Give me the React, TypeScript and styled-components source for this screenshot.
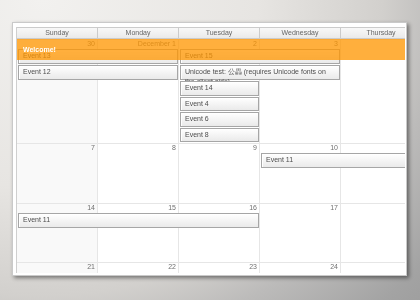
import React from "react";
import styled, { createGlobalStyle } from "styled-components";

const Global = createGlobalStyle`
  html, body { margin: 0; padding: 0; }
  body { font-family: "Liberation Sans", Arial, sans-serif; }
`;

const Stage = styled.div`
  width: 420px;
  height: 300px;
  box-sizing: border-box;
  padding: 22px 0 0 12px;
  overflow: hidden;
  background: radial-gradient(
    ellipse 540px 470px at 10% 0%,
    #f2f1ef 0%,
    #e7e5e2 40%,
    #d2d0cd 63%,
    #bcbbba 74%,
    #a3a3a3 90%,
    #9b9b9b 100%
  );
`;

const Window = styled.div`
  width: 395px;
  height: 254px;
  box-sizing: border-box;
  background: #fff;
  border: 1px solid #c9c9c9;
  padding: 4px 1px 2px 3px;
  box-shadow: 2px 2px 4px rgba(0, 0, 0, 0.45);
`;

const Viewport = styled.div`
  position: relative;
  height: 100%;
  overflow: hidden;
  border-left: 1px solid #cfcfcf;
  font-size: 7px;
  color: #666;
  will-change: transform;
`;

const Calendar = styled.div`
  width: 567px;
`;

const HeaderRow = styled.div`
  display: grid;
  grid-template-columns: repeat(7, 81px);
  height: 12px;
`;

const HeaderCell = styled.div`
  box-sizing: border-box;
  border-top: 1px solid #cbcbcb;
  border-bottom: 1px solid #cbcbcb;
  border-right: 1px solid #cbcbcb;
  background: linear-gradient(#f8f8f8, #eaeaea);
  text-align: center;
  line-height: 10px;
  color: #666;
`;

const Week = styled.div<{ $rows: string }>`
  display: grid;
  grid-template-columns: repeat(7, 81px);
  grid-template-rows: ${(p) => p.$rows};
`;

const Cell = styled.div<{ $col: number; $weekend: boolean }>`
  grid-column: ${(p) => p.$col};
  grid-row: 1 / -1;
  box-sizing: border-box;
  border-right: 1px solid #e6e6e6;
  border-top: 1px solid #e6e6e6;
  background: ${(p) => (p.$weekend ? "#f9f9f9" : "#ffffff")};
`;

const DayNumber = styled.div<{ $col: number }>`
  grid-column: ${(p) => p.$col};
  grid-row: 1;
  text-align: right;
  padding-right: 3px;
  line-height: 10px;
  color: #707070;
`;

const Event = styled.div<{ $col: number; $span: number; $row: number }>`
  grid-column: ${(p) => p.$col} / span ${(p) => p.$span};
  grid-row: ${(p) => p.$row + 1};
  margin: 0 1px 1px 1px;
  box-sizing: border-box;
  border: 1px solid #a6a6a6;
  background: linear-gradient(#ffffff, #eaeaea);
  box-shadow: inset 1px 1px 0 #fff;
  padding: 1px 4px 0 4px;
  line-height: 10px;
  color: #4d4d4d;
  overflow: visible;
  min-width: 0;
`;

const Banner = styled.div`
  position: absolute;
  left: 0;
  right: 0;
  top: 12px;
  height: 21px;
  background: rgba(255, 150, 0, 0.76);
  display: flex;
  align-items: center;
  padding-left: 6px;
  color: #fff;
  font-weight: bold;
  font-size: 7px;
`;

const days = ["Sunday", "Monday", "Tuesday", "Wednesday", "Thursday", "Friday", "Saturday"];

type Ev = { text: string; col: number; span: number; row: number };
type WeekData = { rows: string; labels: string[]; events: Ev[] };

const weeks: WeekData[] = [
  {
    rows: "10px 16px 16px 16px 15px 16px 15px",
    labels: ["30", "December 1", "2", "3", "4", "5", "6"],
    events: [
      { text: "Event 13", col: 1, span: 2, row: 1 },
      { text: "Event 15", col: 3, span: 2, row: 1 },
      { text: "Event 12", col: 1, span: 2, row: 2 },
      { text: "Unicode test: 公畾 (requires Unicode fonts on the client side).", col: 3, span: 2, row: 2 },
      { text: "Event 14", col: 3, span: 1, row: 3 },
      { text: "Event 4", col: 3, span: 1, row: 4 },
      { text: "Event 6", col: 3, span: 1, row: 5 },
      { text: "Event 8", col: 3, span: 1, row: 6 },
    ],
  },
  {
    rows: "10px 16px 34px",
    labels: ["7", "8", "9", "10", "11", "12", "13"],
    events: [{ text: "Event 11", col: 4, span: 4, row: 1 }],
  },
  {
    rows: "10px 16px 33px",
    labels: ["14", "15", "16", "17", "18", "19", "20"],
    events: [{ text: "Event 11", col: 1, span: 3, row: 1 }],
  },
  {
    rows: "10px 16px 34px",
    labels: ["21", "22", "23", "24", "25", "26", "27"],
    events: [],
  },
];

export default function App() {
  return (
    <>
      <Global />
      <Stage>
        <Window>
          <Viewport>
            <Calendar>
              <HeaderRow>
                {days.map((d) => (
                  <HeaderCell key={d}>{d}</HeaderCell>
                ))}
              </HeaderRow>
              {weeks.map((w, wi) => (
                <Week key={wi} $rows={w.rows}>
                  {w.labels.map((l, i) => (
                    <Cell key={"c" + i} $col={i + 1} $weekend={i === 0 || i === 6} />
                  ))}
                  {w.labels.map((l, i) => (
                    <DayNumber key={"n" + i} $col={i + 1}>
                      {l}
                    </DayNumber>
                  ))}
                  {w.events.map((e, i) => (
                    <Event key={"e" + i} $col={e.col} $span={e.span} $row={e.row}>
                      {e.text}
                    </Event>
                  ))}
                </Week>
              ))}
            </Calendar>
            <Banner>Welcome!</Banner>
          </Viewport>
        </Window>
      </Stage>
    </>
  );
}
